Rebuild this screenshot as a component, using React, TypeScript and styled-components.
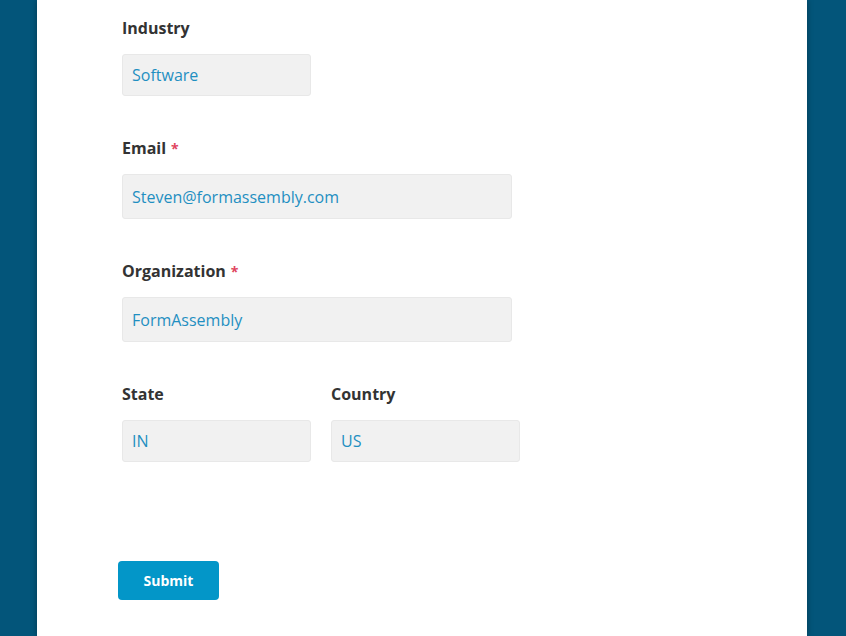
import React from "react";
import styled, { createGlobalStyle } from "styled-components";

const Global = createGlobalStyle`
  html, body { margin: 0; padding: 0; height: 100%; }
  body {
    background: #03557a;
    font-family: "Open Sans", "Noto Sans", sans-serif;
    overflow: hidden;
  }
`;

const Panel = styled.div`
  box-sizing: border-box;
  width: 770px;
  height: 636px;
  margin: 0 0 0 37px;
  background: #ffffff;
  box-shadow: 0 0 6px rgba(0, 0, 0, 0.35);
  padding: 17px 0 0 85px;
`;

const Field = styled.div`
  margin-bottom: 41px;
`;

const Label = styled.div`
  font-size: 16px;
  line-height: 22px;
  height: 22px;
  font-weight: 700;
  color: #333333;
  margin-bottom: 15px;
`;

const Req = styled.span`
  color: #e0445e;
  margin-left: 5px;
  font-size: 14px;
  line-height: 0;
`;

const Input = styled.div<{ $w: number; $h: number }>`
  box-sizing: border-box;
  width: ${(p) => p.$w}px;
  height: ${(p) => p.$h}px;
  background: #f1f1f1;
  border: 1px solid #e8e8e8;
  border-radius: 3px;
  padding: 0 9px;
  display: flex;
  align-items: center;
  font-size: 16px;
  color: #1f8fc1;
`;

const Row = styled.div`
  display: flex;
  gap: 20px;
`;

const Actions = styled.div`
  padding-top: 58px;
  margin-left: -4px;
`;

const Button = styled.button`
  width: 101px;
  height: 39px;
  border: none;
  border-radius: 4px;
  background: #0396c8;
  color: #ffffff;
  font-family: "Open Sans", "Noto Sans", sans-serif;
  font-weight: 700;
  font-size: 14px;
  cursor: pointer;
`;

export default function App() {
  return (
    <>
      <Global />
      <Panel>
        <Field>
          <Label>Industry</Label>
          <Input $w={189} $h={42}>Software</Input>
        </Field>
        <Field>
          <Label>
            Email<Req>*</Req>
          </Label>
          <Input $w={390} $h={45}>Steven@formassembly.com</Input>
        </Field>
        <Field>
          <Label>
            Organization<Req>*</Req>
          </Label>
          <Input $w={390} $h={45}>FormAssembly</Input>
        </Field>
        <Row>
          <Field>
            <Label>State</Label>
            <Input $w={189} $h={42}>IN</Input>
          </Field>
          <Field>
            <Label>Country</Label>
            <Input $w={189} $h={42}>US</Input>
          </Field>
        </Row>
        <Actions>
          <Button>Submit</Button>
        </Actions>
      </Panel>
    </>
  );
}
